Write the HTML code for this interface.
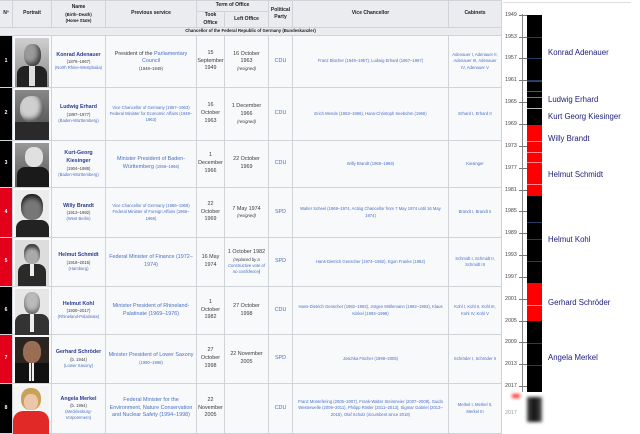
<!DOCTYPE html>
<html><head><meta charset="utf-8"><style>
*{box-sizing:border-box;margin:0;padding:0}
body{width:640px;height:434px;overflow:hidden;background:#fff;font-family:"Liberation Sans",sans-serif;position:relative}
.c{position:absolute;display:flex;align-items:center;justify-content:center;text-align:center;border-right:1px solid #d0d4d8;border-bottom:1px solid #d0d4d8;background:#f8f9fa;font-size:5px;line-height:1.45;color:#3a3a3a;padding:0 2px;flex-direction:column}
.h{background:#eaecf0;font-weight:bold;font-size:5px;color:#202122}
a,.l{color:#4a70c8}
.nm{color:#2a3b8f;font-weight:bold;font-size:5.3px}
.s{font-size:4.2px}
.m{font-size:5.4px}
.num{color:#fff;font-weight:bold;font-size:5px}
.p{position:absolute;overflow:hidden}
.yr{position:absolute;left:505px;font-size:5.3px;color:#444}
.tk{position:absolute;left:519px;width:8px;height:1px;background:#777}
.n{position:absolute;left:548px;font-size:7.8px;color:#1c1c7a}
.ln{position:absolute;left:527px;width:15px;height:1px;background:#2a3a66}
</style></head><body>
<div style="position:absolute;left:0;top:0;width:502px;height:434px;border-left:1px solid #d0d4d8;border-top:1px solid #d0d4d8"></div>
<div class="c h" style="left:0;top:1px;width:13px;height:27px">Nº</div>
<div class="c h" style="left:13px;top:1px;width:39px;height:27px">Portrait</div>
<div class="c h" style="left:52px;top:1px;width:54px;height:27px">Name<span class="s">(Birth–Death)</span><span class="s">(Home State)</span></div>
<div class="c h" style="left:106px;top:1px;width:91px;height:27px">Previous service</div>
<div class="c h" style="left:197px;top:1px;width:72px;height:11px">Term of Office</div>
<div class="c h" style="left:197px;top:12px;width:28px;height:16px">Took<br>Office</div>
<div class="c h" style="left:225px;top:12px;width:44px;height:16px">Left Office</div>
<div class="c h" style="left:269px;top:1px;width:24px;height:27px">Political<br>Party</div>
<div class="c h" style="left:293px;top:1px;width:156px;height:27px">Vice Chancellor</div>
<div class="c h" style="left:449px;top:1px;width:53px;height:27px">Cabinets</div>
<div class="c h" style="left:0;top:28px;width:502px;height:8px;font-size:4.3px">Chancellor of the Federal Republic of Germany (Bundeskanzler)</div>

<div class="c num" style="left:0;top:36px;width:13px;height:52px;background:#000">1</div>
<div class="c num" style="left:0;top:88px;width:13px;height:53px;background:#000">2</div>
<div class="c num" style="left:0;top:141px;width:13px;height:47px;background:#000">3</div>
<div class="c num" style="left:0;top:188px;width:13px;height:50px;background:#e3001b">4</div>
<div class="c num" style="left:0;top:238px;width:13px;height:49px;background:#e3001b">5</div>
<div class="c num" style="left:0;top:287px;width:13px;height:48px;background:#000">6</div>
<div class="c num" style="left:0;top:335px;width:13px;height:49px;background:#e3001b">7</div>
<div class="c num" style="left:0;top:384px;width:13px;height:50px;background:#000">8</div>

<div class="c" style="left:13px;top:36px;width:39px;height:52px"></div>
<div class="c" style="left:13px;top:88px;width:39px;height:53px"></div>
<div class="c" style="left:13px;top:141px;width:39px;height:47px"></div>
<div class="c" style="left:13px;top:188px;width:39px;height:50px"></div>
<div class="c" style="left:13px;top:238px;width:39px;height:49px"></div>
<div class="c" style="left:13px;top:287px;width:39px;height:48px"></div>
<div class="c" style="left:13px;top:335px;width:39px;height:49px"></div>
<div class="c" style="left:13px;top:384px;width:39px;height:50px"></div>
<div class="p" style="left:15px;top:38px;width:34px;height:49px;background:linear-gradient(#d0d0d0,#888)"><div style="position:absolute;left:9px;top:6px;width:17px;height:22px;border-radius:45%;background:#9a9a9a;box-shadow:inset -3px -3px 5px #444"></div><div style="position:absolute;left:2px;top:28px;width:30px;height:22px;background:#222;border-radius:8px 8px 0 0"></div><div style="position:absolute;left:14px;top:28px;width:6px;height:20px;background:#ddd"></div></div>
<div class="p" style="left:15px;top:90px;width:34px;height:50px;background:linear-gradient(#888,#444)"><div style="position:absolute;left:5px;top:6px;width:24px;height:26px;border-radius:45%;background:#cfcfcf;box-shadow:inset -3px -3px 5px #555"></div><div style="position:absolute;left:0;top:32px;width:34px;height:18px;background:#2a2a2a"></div></div>
<div class="p" style="left:15px;top:143px;width:34px;height:44px;background:linear-gradient(#999,#555)"><div style="position:absolute;left:10px;top:4px;width:18px;height:20px;border-radius:45%;background:#e0e0e0"></div><div style="position:absolute;left:2px;top:24px;width:32px;height:20px;background:#1a1a1a;border-radius:8px 8px 0 0"></div></div>
<div class="p" style="left:15px;top:190px;width:34px;height:47px;background:#ececec"><div style="position:absolute;left:6px;top:4px;width:22px;height:26px;border-radius:45%;background:#777;box-shadow:inset 0 4px 4px #222"></div><div style="position:absolute;left:1px;top:30px;width:33px;height:17px;background:#222;border-radius:8px 8px 0 0"></div></div>
<div class="p" style="left:15px;top:240px;width:34px;height:46px;background:#ddd"><div style="position:absolute;left:9px;top:4px;width:16px;height:20px;border-radius:45%;background:#aaa;box-shadow:inset 0 4px 3px #444"></div><div style="position:absolute;left:3px;top:24px;width:28px;height:22px;background:#2a2a2a;border-radius:8px 8px 0 0"></div><div style="position:absolute;left:15px;top:24px;width:4px;height:12px;background:#eee"></div></div>
<div class="p" style="left:15px;top:289px;width:34px;height:46px;background:#e6e6e6"><div style="position:absolute;left:9px;top:3px;width:16px;height:22px;border-radius:45%;background:#bbb;box-shadow:inset 0 -3px 4px #666"></div><div style="position:absolute;left:0;top:25px;width:34px;height:21px;background:#333;border-radius:8px 8px 0 0"></div><div style="position:absolute;left:15px;top:25px;width:4px;height:18px;background:#eee"></div></div>
<div class="p" style="left:15px;top:337px;width:34px;height:46px;background:#2c2420"><div style="position:absolute;left:8px;top:4px;width:18px;height:22px;border-radius:45%;background:#9a6e55"></div><div style="position:absolute;left:0;top:26px;width:34px;height:20px;background:#111"></div><div style="position:absolute;left:14px;top:26px;width:5px;height:18px;background:#b00;border-left:2px solid #eee;border-right:2px solid #eee"></div></div>
<div class="p" style="left:13px;top:386px;width:36px;height:48px;background:#f4f4f4"><div style="position:absolute;left:8px;top:2px;width:20px;height:22px;border-radius:45%;background:#c9a25a"></div><div style="position:absolute;left:11px;top:8px;width:14px;height:16px;border-radius:45%;background:#ecc6a8"></div><div style="position:absolute;left:0;top:25px;width:36px;height:23px;background:#e12a28;border-radius:10px 10px 0 0"></div></div>

<div class="c" style="left:52px;top:36px;width:54px;height:52px"><span class="nm">Konrad Adenauer</span><span class="s">(1876–1967)</span><span class="s l">(North Rhine-Westphalia)</span></div>
<div class="c" style="left:52px;top:88px;width:54px;height:53px"><span class="nm">Ludwig Erhard</span><span class="s">(1897–1977)</span><span class="s l">(Baden-Württemberg)</span></div>
<div class="c" style="left:52px;top:141px;width:54px;height:47px"><span class="nm">Kurt-Georg Kiesinger</span><span class="s">(1904–1988)</span><span class="s l">(Baden-Württemberg)</span></div>
<div class="c" style="left:52px;top:188px;width:54px;height:50px"><span class="nm">Willy Brandt</span><span class="s">(1913–1992)</span><span class="s l">(West Berlin)</span></div>
<div class="c" style="left:52px;top:238px;width:54px;height:49px"><span class="nm">Helmut Schmidt</span><span class="s">(1918–2015)</span><span class="s l">(Hamburg)</span></div>
<div class="c" style="left:52px;top:287px;width:54px;height:48px"><span class="nm">Helmut Kohl</span><span class="s">(1930–2017)</span><span class="s l">(Rhineland-Palatinate)</span></div>
<div class="c" style="left:52px;top:335px;width:54px;height:49px"><span class="nm">Gerhard Schröder</span><span class="s">(b. 1944)</span><span class="s l">(Lower Saxony)</span></div>
<div class="c" style="left:52px;top:384px;width:54px;height:50px"><span class="nm">Angela Merkel</span><span class="s">(b. 1954)</span><span class="s l">(Mecklenburg-<br>Vorpommern)</span></div>

<div class="c m" style="left:106px;top:36px;width:91px;height:52px"><span>President of the <a>Parliamentary Council</a></span><span class="s">(1948–1949)</span></div>
<div class="c s" style="left:106px;top:88px;width:91px;height:53px"><span class="l">Vice Chancellor of Germany (1957–1963)<br>Federal Minister for Economic Affairs (1949–1963)</span></div>
<div class="c m l" style="left:106px;top:141px;width:91px;height:47px"><span>Minister President of Baden-Württemberg <span class="s">(1958–1966)</span></span></div>
<div class="c s l" style="left:106px;top:188px;width:91px;height:50px">Vice Chancellor of Germany (1966–1969)<br>Federal Minister of Foreign Affairs (1966–1969)</div>
<div class="c m l" style="left:106px;top:238px;width:91px;height:49px">Federal Minister of Finance (1972–1974)</div>
<div class="c m l" style="left:106px;top:287px;width:91px;height:48px">Minister President of Rhineland-Palatinate (1969–1976)</div>
<div class="c m l" style="left:106px;top:335px;width:91px;height:49px"><span>Minister President of Lower Saxony</span><span class="s">(1990–1998)</span></div>
<div class="c m l" style="left:106px;top:384px;width:91px;height:50px">Federal Minister for the Environment, Nature Conservation and Nuclear Safety (1994–1998)</div>

<div class="c m" style="left:197px;top:36px;width:28px;height:52px">15<br>September<br>1949</div>
<div class="c m" style="left:197px;top:88px;width:28px;height:53px">16<br>October<br>1963</div>
<div class="c m" style="left:197px;top:141px;width:28px;height:47px">1<br>December<br>1966</div>
<div class="c m" style="left:197px;top:188px;width:28px;height:50px">22<br>October<br>1969</div>
<div class="c m" style="left:197px;top:238px;width:28px;height:49px">16 May<br>1974</div>
<div class="c m" style="left:197px;top:287px;width:28px;height:48px">1 October<br>1982</div>
<div class="c m" style="left:197px;top:335px;width:28px;height:49px">27<br>October<br>1998</div>
<div class="c m" style="left:197px;top:384px;width:28px;height:50px">22<br>November<br>2005</div>
<div class="c m" style="left:225px;top:36px;width:44px;height:52px">16 October 1963<span class="s"><i>(resigned)</i></span></div>
<div class="c m" style="left:225px;top:88px;width:44px;height:53px">1 December<br>1966<span class="s"><i>(resigned)</i></span></div>
<div class="c m" style="left:225px;top:141px;width:44px;height:47px">22 October 1969</div>
<div class="c m" style="left:225px;top:188px;width:44px;height:50px">7 May 1974<span class="s"><i>(resigned)</i></span></div>
<div class="c m" style="left:225px;top:238px;width:44px;height:49px">1 October 1982<span class="s"><i>(replaced by a <a>Constructive vote of no confidence</a>)</i></span></div>
<div class="c m" style="left:225px;top:287px;width:44px;height:48px">27 October 1998</div>
<div class="c m" style="left:225px;top:335px;width:44px;height:49px">22 November<br>2005</div>
<div class="c m" style="left:225px;top:384px;width:44px;height:50px"></div>
<div class="c m l" style="left:269px;top:36px;width:24px;height:52px">CDU</div>
<div class="c m l" style="left:269px;top:88px;width:24px;height:53px">CDU</div>
<div class="c m l" style="left:269px;top:141px;width:24px;height:47px">CDU</div>
<div class="c m l" style="left:269px;top:188px;width:24px;height:50px">SPD</div>
<div class="c m l" style="left:269px;top:238px;width:24px;height:49px">SPD</div>
<div class="c m l" style="left:269px;top:287px;width:24px;height:48px">CDU</div>
<div class="c m l" style="left:269px;top:335px;width:24px;height:49px">SPD</div>
<div class="c m l" style="left:269px;top:384px;width:24px;height:50px">CDU</div>
<div class="c s l" style="left:293px;top:36px;width:156px;height:52px">Franz Blücher (1949–1957), Ludwig Erhard (1957–1967)</div>
<div class="c s l" style="left:293px;top:88px;width:156px;height:53px">Erich Mende (1963–1966), Hans-Christoph Seebohm (1966)</div>
<div class="c s l" style="left:293px;top:141px;width:156px;height:47px">Willy Brandt (1966–1969)</div>
<div class="c s l" style="left:293px;top:188px;width:156px;height:50px">Walter Scheel (1969–1974, Acting Chancellor from 7 May 1974 until 16 May 1974)</div>
<div class="c s l" style="left:293px;top:238px;width:156px;height:49px">Hans-Dietrich Genscher (1974–1982), Egon Franke (1982)</div>
<div class="c s l" style="left:293px;top:287px;width:156px;height:48px">Hans-Dietrich Genscher (1982–1992), Jürgen Möllemann (1992–1993), Klaus Kinkel (1993–1998)</div>
<div class="c s l" style="left:293px;top:335px;width:156px;height:49px">Joschka Fischer (1998–2005)</div>
<div class="c s l" style="left:293px;top:384px;width:156px;height:50px">Franz Müntefering (2005–2007), Frank-Walter Steinmeier (2007–2009), Guido Westerwelle (2009–2011), Philipp Rösler (2011–2013), Sigmar Gabriel (2013–2018), Olaf Scholz (incumbent since 2018)</div>
<div class="c s l" style="left:449px;top:36px;width:53px;height:52px">Adenauer I, Adenauer II, Adenauer III, Adenauer IV, Adenauer V</div>
<div class="c s l" style="left:449px;top:88px;width:53px;height:53px">Erhard I, Erhard II</div>
<div class="c s l" style="left:449px;top:141px;width:53px;height:47px">Kiesinger</div>
<div class="c s l" style="left:449px;top:188px;width:53px;height:50px">Brandt I, Brandt II</div>
<div class="c s l" style="left:449px;top:238px;width:53px;height:49px">Schmidt I, Schmidt II, Schmidt III</div>
<div class="c s l" style="left:449px;top:287px;width:53px;height:48px">Kohl I, Kohl II, Kohl III, Kohl IV, Kohl V</div>
<div class="c s l" style="left:449px;top:335px;width:53px;height:49px">Schröder I, Schröder II</div>
<div class="c s l" style="left:449px;top:384px;width:53px;height:50px">Merkel I, Merkel II, Merkel III</div>

<div style="position:absolute;left:503px;top:2px;width:128px;height:1px;background:#ddd"></div>
<div style="position:absolute;left:522px;top:14px;width:1px;height:378px;background:#888"></div>
<div style="position:absolute;left:527px;top:15px;width:15px;height:377px;background:#000"></div>
<div style="position:absolute;left:527px;top:125px;width:15px;height:71px;background:#ff0000"></div>
<div style="position:absolute;left:527px;top:283px;width:15px;height:38px;background:#ff0000"></div>
<div style="position:absolute;left:527px;top:397px;width:15px;height:25px;background:linear-gradient(90deg,#444,#111,#555);filter:blur(1.5px)"></div>
<div style="position:absolute;left:512px;top:394px;width:8px;height:4px;background:#f33;filter:blur(1.5px)"></div>
<div class="ln" style="top:37px"></div><div class="ln" style="top:58px"></div><div class="ln" style="top:80px"></div><div class="ln" style="top:81px;background:#345"></div><div class="ln" style="top:91px;background:#556"></div><div class="ln" style="top:97px;background:#778"></div><div class="ln" style="top:108px;background:#bbb"></div>
<div class="ln" style="top:141px;background:#f88"></div><div class="ln" style="top:152px;background:#f88"></div><div class="ln" style="top:162px;background:#f88"></div><div class="ln" style="top:184px;background:#f88"></div>
<div class="ln" style="top:222px"></div><div class="ln" style="top:239px"></div><div class="ln" style="top:261px"></div><div class="ln" style="top:305px;background:#f88"></div><div class="ln" style="top:343px"></div><div class="ln" style="top:365px"></div>
<div class="yr" style="top:12px">1949</div><div class="yr" style="top:34px">1953</div><div class="yr" style="top:55px">1957</div><div class="yr" style="top:77px">1961</div><div class="yr" style="top:99px">1965</div><div class="yr" style="top:121px">1969</div><div class="yr" style="top:143px">1973</div><div class="yr" style="top:165px">1977</div><div class="yr" style="top:187px">1981</div><div class="yr" style="top:208px">1985</div><div class="yr" style="top:230px">1989</div><div class="yr" style="top:252px">1993</div><div class="yr" style="top:274px">1997</div><div class="yr" style="top:296px">2001</div><div class="yr" style="top:318px">2005</div><div class="yr" style="top:339px">2009</div><div class="yr" style="top:361px">2013</div><div class="yr" style="top:383px">2017</div>
<div class="yr" style="top:410px;color:#999">2017</div>
<div class="tk" style="top:15px"></div><div class="tk" style="top:37px"></div><div class="tk" style="top:58px"></div><div class="tk" style="top:80px"></div><div class="tk" style="top:102px"></div><div class="tk" style="top:124px"></div><div class="tk" style="top:146px"></div><div class="tk" style="top:168px"></div><div class="tk" style="top:190px"></div><div class="tk" style="top:211px"></div><div class="tk" style="top:233px"></div><div class="tk" style="top:255px"></div><div class="tk" style="top:277px"></div><div class="tk" style="top:299px"></div><div class="tk" style="top:321px"></div><div class="tk" style="top:342px"></div><div class="tk" style="top:364px"></div><div class="tk" style="top:386px"></div>
<div class="n" style="top:48px">Konrad Adenauer</div>
<div class="n" style="top:95px">Ludwig Erhard</div>
<div class="n" style="top:112px">Kurt Georg Kiesinger</div>
<div class="n" style="top:134px">Willy Brandt</div>
<div class="n" style="top:170px">Helmut Schmidt</div>
<div class="n" style="top:235px">Helmut Kohl</div>
<div class="n" style="top:298px">Gerhard Schröder</div>
<div class="n" style="top:353px">Angela Merkel</div>
</body></html>
